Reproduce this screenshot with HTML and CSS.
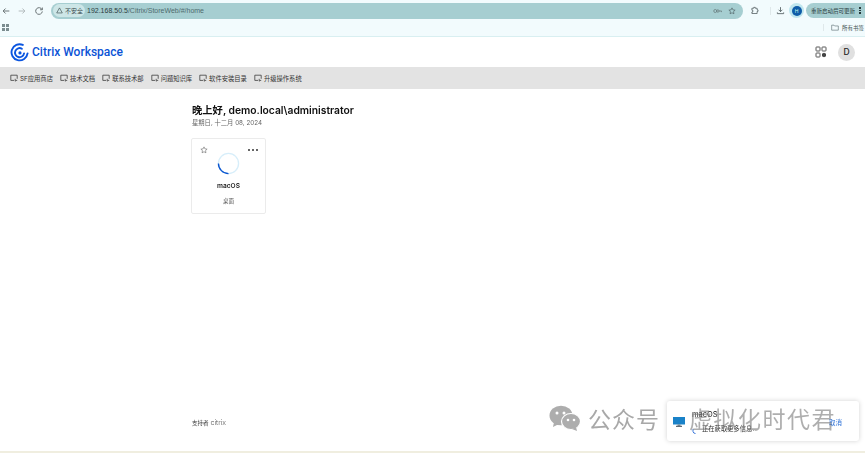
FILE: index.html
```html
<!DOCTYPE html>
<html lang="zh">
<head>
<meta charset="utf-8">
<title>Citrix Workspace</title>
<link rel="stylesheet" href="styles.css">
</head>
<body>
<div class="page">
  <div class="browser">
    <div class="tabrow">
      <svg class="navicon" viewBox="0 0 12 12"><path d="M10 6H2.500M5.500 3 2.500 6l3 3" fill="none" stroke="#6d7678" stroke-width="1.200"/></svg>
      <svg class="navicon dim" viewBox="0 0 12 12"><path d="M2 6h7.500M6.500 3l3 3-3 3" fill="none" stroke="#b4bcbe" stroke-width="1.200"/></svg>
      <svg class="navicon" viewBox="0 0 12 12"><path d="M9.600 4.200A4 4 0 1 0 10 6.500M10 1.800v2.700H7.300" fill="none" stroke="#5f686a" stroke-width="1.100"/></svg>
      <div class="omnibox">
        <div class="secure">
          <svg class="warn" viewBox="0 0 10 10"><path d="M5 1.300 9 8.500H1z" fill="none" stroke="#46585a" stroke-width="1"/></svg>
          <span>不安全</span>
        </div>
        <span class="url"><b>192.168.50.5</b>/Citrix/StoreWeb/#/home</span>
        <svg class="omni-key" viewBox="0 0 12 8"><circle cx="3" cy="4" r="2" fill="none" stroke="#66797b"/><circle cx="6.500" cy="4" r="1.600" fill="none" stroke="#66797b"/><path d="M8 4h3.500v1.500" fill="none" stroke="#66797b"/></svg>
        <svg class="omni-star" viewBox="0 0 12 12"><path d="m6 1.300 1.400 3 3.300.4-2.400 2.200.6 3.300L6 8.600l-2.900 1.600.6-3.300-2.400-2.200 3.300-.4z" fill="none" stroke="#46585a" stroke-width=".9"/></svg>
      </div>
      <svg class="ext" viewBox="0 0 12 12"><path d="M2.500 3H5V1.800h2V3h2.500v2.200h1.200v2H9.500V10h-7V8h1.200V5.500H2.500z" fill="none" stroke="#4f5a5c" stroke-width="1"/></svg>
      <span class="sep"></span>
      <svg class="dl" viewBox="0 0 12 12"><path d="M6 1.500v6M3.500 5 6 7.500 8.500 5M1.800 8.500v1.700h8.400V8.500" fill="none" stroke="#4f5a5c" stroke-width="1.100"/></svg>
      <div class="profile"><span>H</span></div>
      <div class="update"><span>重新启动后可更新</span><i class="kebab"><b></b><b></b><b></b></i></div>
    </div>
    <div class="bookmarks">
      <span class="grid4"><i></i><i></i><i></i><i></i></span>
      <span class="bm-sep"></span>
      <svg class="folder" viewBox="0 0 12 10"><path d="M1 1.500h3.500l1 1.200H11v6.300H1z" fill="none" stroke="#55686b" stroke-width=".9"/></svg>
      <span class="bm-label">所有书签</span>
    </div>
  </div>

  <header class="header">
    <div class="logo">
      <svg class="logo-mark" viewBox="0 0 20 20"><g fill="none" stroke="#0a55e0" stroke-width="2" stroke-linecap="round"><path d="M13.500 2A8.500 8.500 0 1 0 18.500 11"/><path d="M12.500 6A4.800 4.800 0 1 0 14.800 11"/></g><circle cx="10.500" cy="10.500" r="1.700" fill="#0a55e0"/></svg>
      <span>Citrix Workspace</span>
    </div>
    <div class="header-right">
      <svg class="apps" viewBox="0 0 12 12"><g fill="none" stroke="#444" stroke-width=".9"><rect x="1" y="1" width="4" height="4" rx=".6"/><rect x="7" y="1" width="4" height="4" rx=".6"/><rect x="1" y="7" width="4" height="4" rx=".6"/></g><path d="m9 6.700 2 1.150v2.300L9 11.300l-2-1.150v-2.300z" fill="#444"/></svg>
      <div class="avatar">D</div>
    </div>
  </header>

  <nav class="nav">
    <a class="nav-item"><svg class="nav-ic" viewBox="0 0 10 10"><path d="M5 8H1V1.500h8V6M6.500 6v3l1-1h1.500" fill="none" stroke="#3e3e3e" stroke-width="1"/></svg>SF应用商店</a>
    <a class="nav-item"><svg class="nav-ic" viewBox="0 0 10 10"><path d="M5 8H1V1.500h8V6M6.500 6v3l1-1h1.500" fill="none" stroke="#3e3e3e" stroke-width="1"/></svg>技术文档</a>
    <a class="nav-item"><svg class="nav-ic" viewBox="0 0 10 10"><path d="M5 8H1V1.500h8V6M6.500 6v3l1-1h1.500" fill="none" stroke="#3e3e3e" stroke-width="1"/></svg>联系技术部</a>
    <a class="nav-item"><svg class="nav-ic" viewBox="0 0 10 10"><path d="M5 8H1V1.500h8V6M6.500 6v3l1-1h1.500" fill="none" stroke="#3e3e3e" stroke-width="1"/></svg>问题知识库</a>
    <a class="nav-item"><svg class="nav-ic" viewBox="0 0 10 10"><path d="M5 8H1V1.500h8V6M6.500 6v3l1-1h1.500" fill="none" stroke="#3e3e3e" stroke-width="1"/></svg>软件安装目录</a>
    <a class="nav-item"><svg class="nav-ic" viewBox="0 0 10 10"><path d="M5 8H1V1.500h8V6M6.500 6v3l1-1h1.500" fill="none" stroke="#3e3e3e" stroke-width="1"/></svg>升级操作系统</a>
  </nav>

  <main class="main">
    <h1 class="greeting">晚上好, demo.local\administrator</h1>
    <p class="date">星期日, 十二月 08, 2024</p>
    <div class="card">
      <div class="card-top">
        <svg class="star" viewBox="0 0 12 12"><path d="m6 1.300 1.400 3 3.300.4-2.400 2.200.6 3.300L6 8.600l-2.900 1.600.6-3.300-2.400-2.200 3.300-.4z" fill="none" stroke="#555" stroke-width=".8"/></svg>
        <i class="dots"><b></b><b></b><b></b></i>
      </div>
      <svg class="spinner" viewBox="0 0 24 24"><circle cx="12" cy="12" r="10.500" fill="none" stroke="#d7eefa" stroke-width="1.400"/><path d="M1.500 12A10.500 10.500 0 0 0 12 22.500" fill="none" stroke="#0a55d0" stroke-width="1.400"/></svg>
      <div class="app-name">macOS</div>
      <div class="app-type">桌面</div>
    </div>
    <footer class="powered"><span>支持者</span><span class="citrix">citrix</span></footer>
  </main>

  <div class="toast">
    <svg class="monitor" viewBox="0 0 12 10"><rect x="0" y="0" width="12" height="7.500" fill="#1a82c8"/><rect x="4.500" y="7.500" width="3" height="1.300" fill="#6b7a86"/><rect x="3" y="8.800" width="6" height="1" fill="#3a4650"/></svg>
    <div class="toast-text">
      <div class="toast-title">macOS</div>
      <div class="toast-sub"><svg class="mini-spin" viewBox="0 0 6 6"><path d="M1 1v2.500A2.500 2.500 0 0 0 3.500 5.500" fill="none" stroke="#0a55d0" stroke-width=".8"/></svg>正在获取更多信息...</div>
    </div>
    <a class="toast-cancel">取消</a>
  </div>

  <div class="watermark">
    <svg class="wechat" viewBox="0 0 32 26"><ellipse cx="12" cy="10.500" rx="11.500" ry="9.800" fill="#adadad"/><path d="m5 17-1 5 6-3z" fill="#adadad"/><ellipse cx="22" cy="16.500" rx="9.500" ry="8" fill="#adadad" stroke="#fff" stroke-width="1.200"/><path d="m27 22 1 4-5-2z" fill="#adadad"/><circle cx="8" cy="8" r="1.500" fill="#fff"/><circle cx="15" cy="8" r="1.500" fill="#fff"/><circle cx="19" cy="15" r="1.300" fill="#fff"/><circle cx="25" cy="15" r="1.300" fill="#fff"/></svg>
    <span class="wm-a">公众号</span>
    <span class="wm-b">虚拟化时代君</span>
  </div>
  <div class="bottom-line"></div>
</div>
</body>
</html>
```
FILE: styles.css
```css
* { box-sizing: border-box; }
html, body { margin: 0; padding: 0; }
body { background: #fff; font-family: "Inter", "Noto Sans CJK SC", sans-serif; overflow: hidden; }
.page { position: relative; width: 865px; height: 453px; display: flex; flex-direction: column; overflow: hidden; filter: blur(.35px); }

.browser { height: 37px; flex: none; background: #f2fbfd; border-bottom: 1px solid #d9eff1; }
.tabrow { height: 20px; padding: 1px 0 0 1px; display: flex; align-items: center; }
.navicon { width: 10px; height: 10px; flex: none; margin-right: 6px; }
.navicon.dim { margin-right: 7px; }
.omnibox { margin-left: 1px; width: 692px; height: 16px; border-radius: 8px; background: #a6ced1; display: flex; align-items: center; padding-left: 2px; }
.secure { height: 13px; width: 32px; border-radius: 7px; background: #cde6e7; display: flex; align-items: center; padding-left: 3px; font-size: 6px; color: #37484a; gap: 2px; flex: none; white-space: nowrap; }
.warn { width: 7px; height: 7px; flex: none; }
.url { margin-left: 2px; font-family: "Liberation Sans", sans-serif; font-size: 7px; color: #4f6b6e; white-space: nowrap; flex: 1; }
.url b { font-weight: 400; color: #2c3b3d; }
.omni-key { width: 9px; height: 6px; margin-right: 6px; flex: none; }
.omni-star { width: 8px; height: 8px; margin-right: 7px; flex: none; }
.ext { width: 9px; height: 9px; margin-left: 7px; flex: none; }
.sep { width: 1px; height: 8px; background: #dfe8ea; margin-left: 11px; flex: none; }
.dl { width: 9px; height: 9px; margin-left: 5px; flex: none; }
.profile { width: 15px; height: 15px; margin-left: 4px; border-radius: 50%; background: #bfe6ee; display: flex; align-items: center; justify-content: center; flex: none; }
.profile span { width: 10px; height: 10px; border-radius: 50%; background: #0e5ca8; color: #cfe; font-size: 5px; line-height: 10px; text-align: center; }
.update { margin-left: 2px; width: 59px; height: 15px; border-radius: 8px 0 0 8px; background: #a6ced1; display: flex; align-items: center; padding-left: 5px; font-size: 5.500px; color: #26393b; white-space: nowrap; flex: none; }
.kebab { display: flex; flex-direction: column; gap: 1px; margin-left: 4px; }
.kebab b { width: 1.500px; height: 1.500px; background: #26393b; display: block; }

.bookmarks { height: 16px; display: flex; align-items: center; padding-left: 2px; padding-bottom: 1px; }
.grid4 { width: 7px; height: 7px; display: grid; grid-template-columns: 3px 3px; gap: 1px; flex: none; }
.grid4 i { background: #7b8c8f; }
.bm-sep { width: 1px; height: 7px; background: #dfe8ea; margin-left: 814px; flex: none; }
.folder { width: 8px; height: 7px; margin-left: 7px; flex: none; }
.bm-label { margin-left: 3px; font-size: 5.500px; color: #405052; white-space: nowrap; }

.header { height: 30px; flex: none; background: #fff; display: flex; align-items: center; justify-content: space-between; padding: 0 10px 0 10px; }
.logo { display: flex; align-items: center; gap: 3px; color: #0b53d6; font-family: "Roboto", sans-serif; font-size: 12px; font-weight: 500; white-space: nowrap; }
.logo-mark { width: 19px; height: 19px; flex: none; }
.header-right { display: flex; align-items: center; gap: 11px; }
.apps { width: 12px; height: 12px; flex: none; }
.avatar { width: 17px; height: 17px; border-radius: 50%; background: #e0e0e0; color: #222; font-size: 8.500px; font-weight: 500; line-height: 17px; text-align: center; }

.nav { height: 22px; flex: none; background: #e3e3e3; display: flex; align-items: center; padding-left: 10px; gap: 7px; }
.nav-item { display: flex; align-items: center; gap: 2px; font-size: 6.300px; color: #333; white-space: nowrap; }
.nav-ic { width: 8px; height: 8px; flex: none; }

.main { flex: 1; position: relative; padding: 14px 0 0 192px; }
.greeting { margin: 0; font-size: 10.300px; font-weight: 600; line-height: 14px; color: #111; white-space: nowrap; }
.date { margin: 2px 0 0; font-size: 6.300px; line-height: 9px; color: #666; white-space: nowrap; }
.card { margin: 10px 0 0 -1px; width: 75px; height: 76px; border: 1px solid #ebebeb; border-radius: 2px; display: flex; flex-direction: column; align-items: center; background: #fff; }
.card-top { align-self: stretch; display: flex; justify-content: space-between; align-items: center; padding: 7px 7px 0 8px; height: 14px; }
.star { width: 8px; height: 8px; flex: none; }
.dots { display: flex; gap: 2px; }
.dots b { width: 2px; height: 2px; border-radius: 50%; background: #333; display: block; }
.spinner { width: 23px; height: 23px; flex: none; margin-top: -1px; }
.app-name { margin-top: 7px; font-size: 6.600px; font-weight: 600; color: #222; line-height: 9px; }
.app-type { margin-top: 6px; font-size: 5.500px; color: #555; line-height: 8px; }

.powered { position: absolute; left: 192px; top: 329px; display: flex; align-items: center; gap: 2px; font-size: 5.500px; color: #333; white-space: nowrap; }
.citrix { font-size: 7px; font-weight: 300; color: #555; }

.toast { position: absolute; left: 667px; top: 401px; width: 192px; height: 40px; background: #fff; border-radius: 3px; box-shadow: 0 0 5px rgba(0, 0, 0, .18); display: flex; align-items: center; padding-left: 6px; }
.monitor { width: 12px; height: 10px; flex: none; margin-top: 1px; }
.toast-text { margin-left: 7px; width: 136px; flex: none; padding-top: 1px; }
.toast-title { font-size: 7.500px; line-height: 9px; color: #222; }
.toast-sub { margin-top: 6px; display: flex; align-items: center; gap: 4px; font-size: 6.300px; line-height: 8px; color: #333; white-space: nowrap; }
.mini-spin { width: 6px; height: 6px; flex: none; position: relative; top: 2px; }
.toast-cancel { position: absolute; left: 162px; top: 16px; font-size: 6.500px; color: #2a6fd6; }

.watermark { position: absolute; left: 549px; top: 404px; display: flex; align-items: center; color: #a8a8a8; font-family: "Noto Sans CJK SC", sans-serif; font-size: 23px; line-height: 28px; white-space: nowrap; }
.wechat { width: 32px; height: 26px; flex: none; }
.wm-a { margin-left: 7px; letter-spacing: 1px; }
.wm-b { margin-left: 29px; letter-spacing: 1.500px; color: rgba(120, 120, 120, .6); }
.bottom-line { position: absolute; left: 0; right: 0; bottom: 0; height: 2px; background: #f0eee0; }
```
